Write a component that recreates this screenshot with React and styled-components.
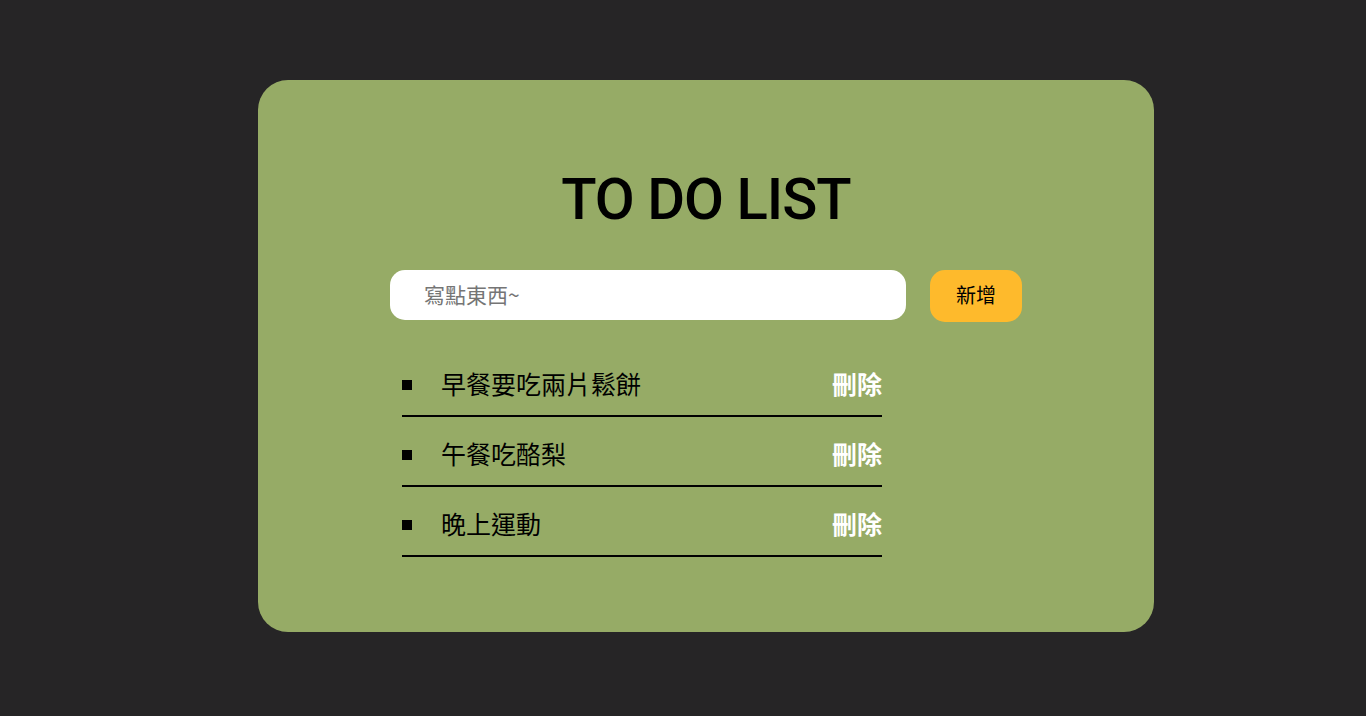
import React from 'react';
import styled, { createGlobalStyle } from 'styled-components';

const GlobalStyle = createGlobalStyle`
  html, body {
    margin: 0;
    padding: 0;
    background: #262526;
  }

  body {
    font-family: "Liberation Sans", "Noto Sans CJK TC", sans-serif;
  }
`;

const Page = styled.div`
  display: flex;
  justify-content: center;
  min-height: 716px;
  padding: 80px 0 0 46px;
  box-sizing: border-box;
`;

const Card = styled.div`
  background: #96ab66;
  border-radius: 30px;
  box-sizing: border-box;
  height: 552px;
  padding: 86px 132px 0;
  width: 896px;
`;

const Title = styled.h1`
  color: #000;
  font-family: Roboto, "Liberation Sans", sans-serif;
  font-size: 58px;
  font-weight: 500;
  letter-spacing: -1px;
  line-height: 66px;
  margin: 0 0 38px;
  text-align: center;
`;

const Form = styled.div`
  display: flex;
  gap: 24px;
  align-items: flex-start;
`;

const Input = styled.input`
  background: #fff;
  border: none;
  border-radius: 15px;
  box-sizing: border-box;
  color: #333;
  font-family: "Noto Sans CJK TC", sans-serif;
  font-size: 21px;
  height: 50px;
  outline: none;
  padding: 0 34px 3px;
  width: 516px;

  &::placeholder {
    color: #757575;
  }
`;

const AddButton = styled.button`
  background: #feba2c;
  border: none;
  border-radius: 15px;
  color: #000;
  font-family: "Noto Sans CJK TC", sans-serif;
  font-size: 20px;
  height: 52px;
  padding: 0 0 4px;
  width: 92px;
`;

const List = styled.ul`
  list-style: none;
  margin: 25px 0 0 12px;
  padding: 0;
  width: 480px;
`;

const Item = styled.li`
  align-items: center;
  border-bottom: 2px solid #000;
  box-sizing: border-box;
  display: flex;
  height: 70px;
  padding-top: 4px;
`;

const Bullet = styled.span`
  background: #000;
  height: 10px;
  margin: 4px 29px 0 0;
  width: 10px;
`;

const Text = styled.span`
  color: #000;
  flex: 1;
  font-family: "Noto Sans CJK TC", sans-serif;
  font-size: 25px;
`;

const Delete = styled.span`
  color: #fff;
  font-family: "Noto Sans CJK TC", sans-serif;
  font-size: 25px;
  font-weight: 700;
`;

const todos = ['早餐要吃兩片鬆餅', '午餐吃酪梨', '晚上運動'];

const App = () => (
  <Page>
    <GlobalStyle />
    <Card>
      <Title>TO DO LIST</Title>
      <Form>
        <Input placeholder="寫點東西~" />
        <AddButton>新增</AddButton>
      </Form>
      <List>
        { todos.map((todo) => (
          <Item key={todo}>
            <Bullet />
            <Text>{ todo }</Text>
            <Delete>刪除</Delete>
          </Item>
        )) }
      </List>
    </Card>
  </Page>
);

export default App;
